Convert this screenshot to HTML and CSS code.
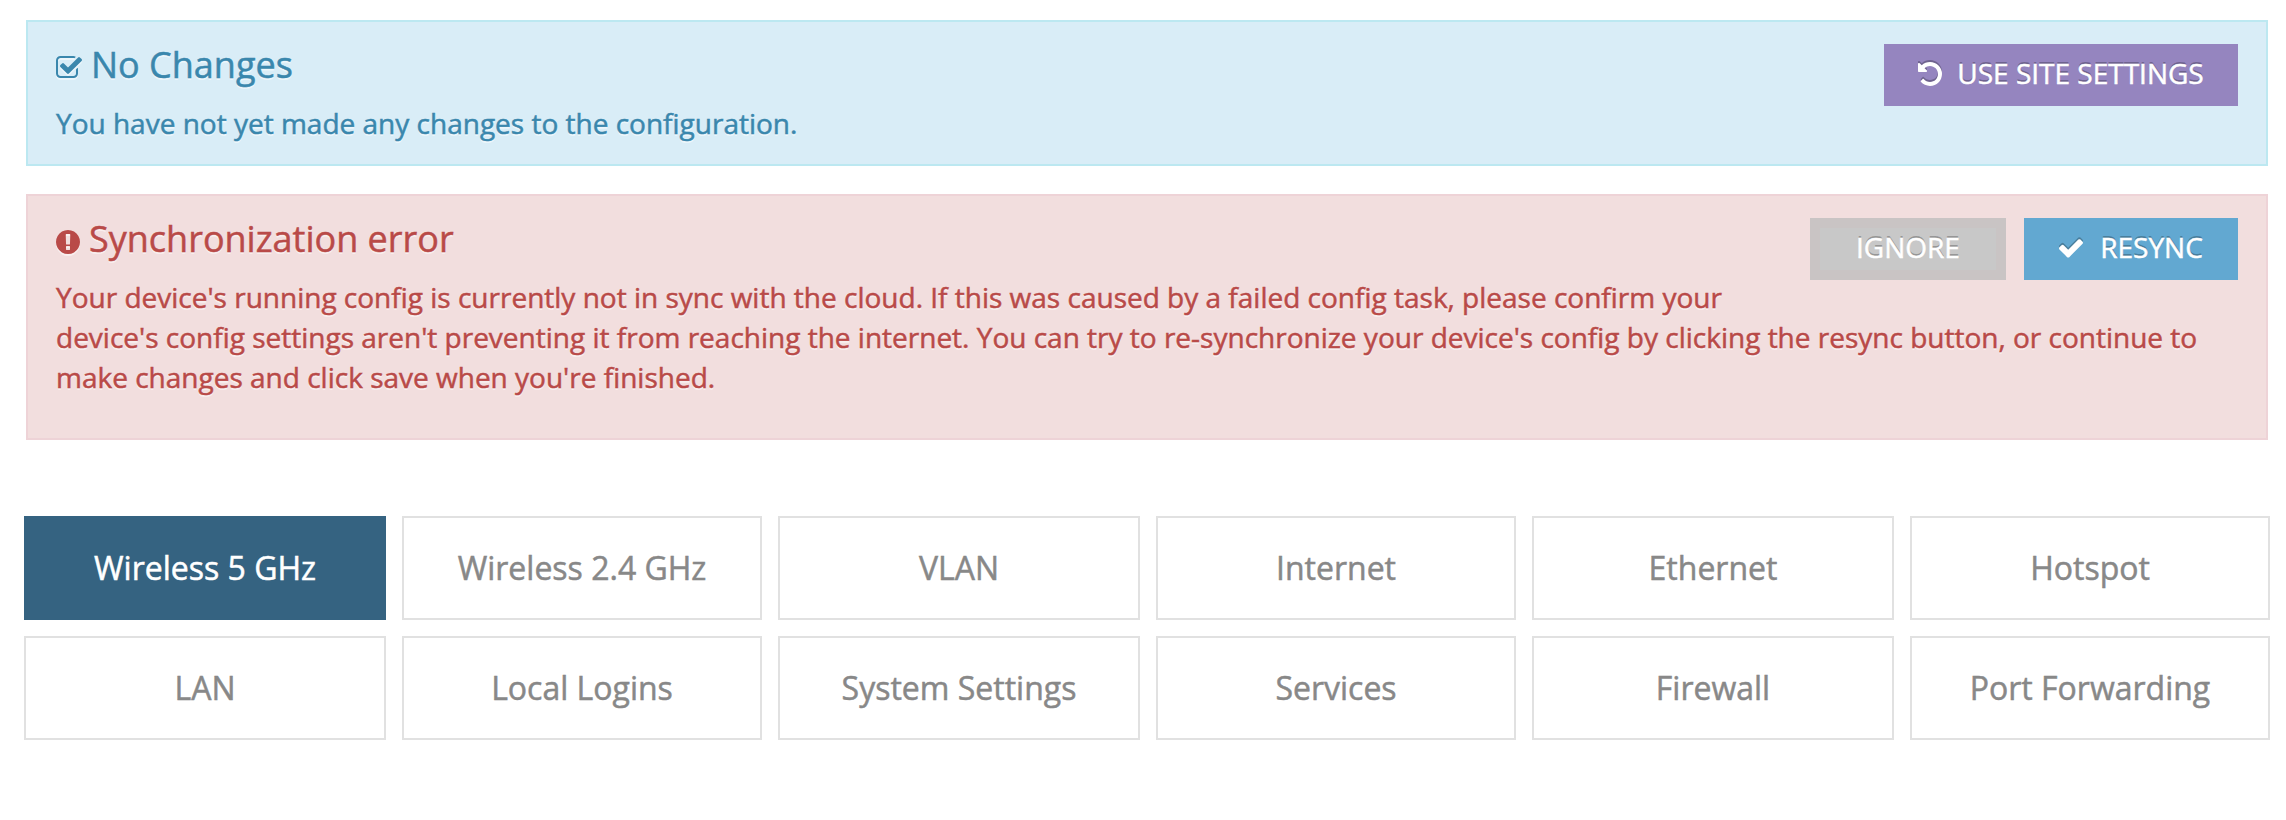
FILE: index.html
```
<!DOCTYPE html>
<html lang="en">
<head>
    <meta charset="UTF-8">
    <meta name="viewport" content="width=device-width, initial-scale=1.0">
    <title>Device Configuration</title>
    <link rel="stylesheet" href="styles.css">
</head>
<body>

<div class="alert alert-info">
    <div class="alert-actions">
        <button class="btn btn-purple">
            <svg class="icon" viewBox="128 128 1536 1536"><path d="M1664 896q0 156-61 298t-164 245-245 164-298 61q-172 0-327-72.500t-264-204.500q-7-10-6.500-22.500t8.500-20.500l137-138q10-9 25-9 16 2 23 12 73 95 179 147t225 52q104 0 198.500-40.500t163.500-109.500 109.500-163.500 40.500-198.500-40.500-198.500-109.500-163.500-163.500-109.500-198.500-40.500q-98 0-188 35.500t-160 101.500l137 138q31 30 14 69-17 40-59 40h-448q-26 0-45-19t-19-45v-448q0-42 40-59 39-17 69 14l130 129q107-101 244.500-156.500t284.500-55.500q156 0 298 61t245 164 164 245 61 298z"/></svg>
            <span>USE SITE SETTINGS</span>
        </button>
    </div>
    <h4>
        <svg class="icon icon-edit" viewBox="64 128 1664 1408"><path d="M1472 930v318q0 119-84.500 203.500t-203.500 84.500h-832q-119 0-203.500-84.500t-84.500-203.500v-832q0-119 84.500-203.500t203.500-84.500h832q63 0 117 25 15 7 18 23 3 17-9 29l-49 49q-10 10-23 10-3 0-9-2-23-6-45-6h-832q-66 0-113 47t-47 113v832q0 66 47 113t113 47h832q66 0 113-47t47-113v-254q0-13 9-22l64-64q10-10 23-10 6 0 12 3 20 8 20 29zm231-489l-814 814q-24 24-57 24t-57-24l-430-430q-24-24-24-57t24-57l110-110q24-24 57-24t57 24l263 263 647-647q24-24 57-24t57 24l110 110q24 24 24 57t-24 57z"/></svg>
        <span>No Changes</span>
    </h4>
    <p>You have not yet made any changes to the configuration.</p>
</div>

<div class="alert alert-danger">
    <div class="alert-actions">
        <button class="btn btn-grey">IGNORE</button>
        <button class="btn btn-blue">
            <svg class="icon" viewBox="121 128 1550 1550"><path d="M1671 566q0 40-28 68l-724 724-136 136q-28 28-68 28t-68-28l-136-136-362-362q-28-28-28-68t28-68l136-136q28-28 68-28t68 28l294 295 656-657q28-28 68-28t68 28l136 136q28 28 28 68z"/></svg>
            <span>RESYNC</span>
        </button>
    </div>
    <h4>
        <svg class="icon icon-error" viewBox="128 128 1536 1536"><path d="M896 128q209 0 385.500 103t279.500 279.500 103 385.500-103 385.500-279.500 279.500-385.500 103-385.500-103-279.500-279.500-103-385.500 103-385.500 279.500-279.500 385.500-103zm128 1247v-190q0-14-9-23.500t-22-9.500h-192q-13 0-23 10t-10 23v190q0 13 10 23t23 10h192q13 0 22-9.500t9-23.500zm-2-344l18-621q0-12-10-18-10-8-24-8h-220q-14 0-24 8-10 6-10 18l17 621q0 10 10 17.500t24 7.500h185q14 0 23.500-7.500t10.500-17.500z"/></svg>
        <span>Synchronization error</span>
    </h4>
    <p>Your device's running config is currently not in sync with the cloud. If this was caused by a failed config task, please confirm your device's config settings aren't preventing it from reaching the internet. You can try to re-synchronize your device's config by clicking the resync button, or continue to make changes and click save when you're finished.</p>
</div>

<div class="tabs">
    <a class="tab active">Wireless 5 GHz</a>
    <a class="tab">Wireless 2.4 GHz</a>
    <a class="tab">VLAN</a>
    <a class="tab">Internet</a>
    <a class="tab">Ethernet</a>
    <a class="tab">Hotspot</a>
    <a class="tab">LAN</a>
    <a class="tab">Local Logins</a>
    <a class="tab">System Settings</a>
    <a class="tab">Services</a>
    <a class="tab">Firewall</a>
    <a class="tab">Port Forwarding</a>
</div>

</body>
</html>
```
FILE: styles.css
```
* {
    box-sizing: border-box;
}

body {
    margin: 0;
    padding: 20px 16px 0 24px;
    background-color: #fff;
    font-family: "Open Sans", sans-serif;
    font-size: 28px;
    line-height: 40px;
    -webkit-text-stroke: 0.5px;
}

/* Alerts */
.alert {
    margin: 0 2px 28px;
    padding: 22px 28px 21px;
    border: 2px solid;
    text-shadow: 0 2px 0 rgba(255, 255, 255, 0.5);
}

.alert-info {
    background-color: #d9edf7;
    border-color: #bce8f1;
    color: #3a87ad;
}

.alert-danger {
    padding-bottom: 41px;
    background-color: #f2dede;
    border-color: #eed3d7;
    color: #b94a48;
}

.alert h4 {
    display: flex;
    margin: 0 0 17px;
    font-size: 36px;
    font-weight: 400;
    line-height: 42px;
}

.alert p {
    margin: 0;
}

.icon {
    width: 24px;
    height: 24px;
    fill: currentColor;
    filter: drop-shadow(0 -2px 0 rgba(0, 0, 0, 0.25));
}

.icon-edit,
.icon-error {
    margin: 12px 9px 0 0;
    filter: drop-shadow(0 2px 0 rgba(255, 255, 255, 0.5));
}

.icon-edit {
    width: 26px;
    height: 22px;
}

/* Buttons */
.alert-actions {
    float: right;
    display: flex;
    gap: 18px;
}

.btn {
    display: flex;
    align-items: center;
    justify-content: center;
    height: 62px;
    padding: 0 0 4px;
    border: 0;
    color: #fff;
    font-family: inherit;
    font-size: 28px;
    line-height: 40px;
    text-shadow: 0 -2px 0 rgba(0, 0, 0, 0.25);
    cursor: pointer;
}

.btn .icon {
    margin: 2px 15px 0 0;
}

.btn-purple {
    width: 354px;
    background-color: #9585bf;
}

.btn-grey {
    width: 196px;
    background-color: #c8c8c8;
    border: 10px solid #c9c4c4;
}

.btn-blue {
    width: 214px;
    background-color: #62a8d1;
}

.btn-blue .icon {
    margin-right: 17px;
}

/* Config sections */
.tabs {
    display: grid;
    grid-template-columns: repeat(3, 362fr 360fr);
    gap: 16px;
    margin-top: 76px;
}

.tab {
    height: 104px;
    border: 2px solid #e1e1e1;
    color: #888;
    font-size: 32px;
    line-height: 100px;
    text-align: center;
}

.tab.active {
    background-color: #356381;
    border-color: #356381;
    color: #fff;
}
```
